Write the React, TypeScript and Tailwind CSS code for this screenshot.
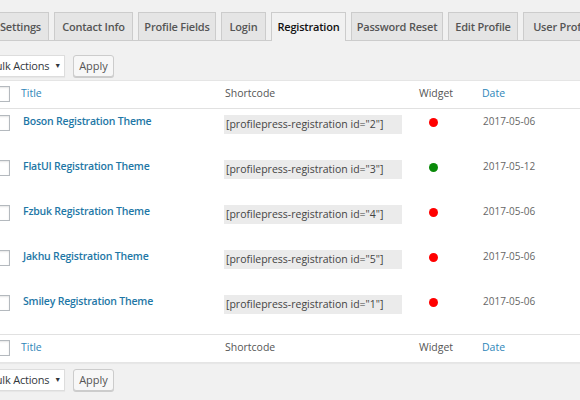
import React from 'react'

const tabs = [
  { label: 'Settings', w: 57 },
  { label: 'Contact Info', w: 79 },
  { label: 'Profile Fields', w: 78 },
  { label: 'Login', w: 45 },
  { label: 'Registration', w: 75, active: true },
  { label: 'Password Reset', w: 92 },
  { label: 'Edit Profile', w: 70 },
  { label: 'User Profile', w: 80 },
]

const rows = [
  { title: 'Boson Registration Theme', id: '2', on: false, date: '2017-05-06' },
  { title: 'FlatUI Registration Theme', id: '3', on: true, date: '2017-05-12' },
  { title: 'Fzbuk Registration Theme', id: '4', on: false, date: '2017-05-06' },
  { title: 'Jakhu Registration Theme', id: '5', on: false, date: '2017-05-06' },
  { title: 'Smiley Registration Theme', id: '1', on: false, date: '2017-05-06' },
]

const cols = 'grid grid-cols-[36px_205px_189px_62px_140px]'

const Checkbox = () => (
  <div className="ml-[13px] h-[16px] w-[16px] border border-[#b4b9be] bg-white shadow-[inset_0_1px_2px_rgba(0,0,0,0.1)]" />
)

const TableNav = () => (
  <div className="-ml-[20px] flex items-center gap-[8px]">
    <div className="flex h-[22px] w-[85px] items-center justify-end gap-[5px] whitespace-nowrap border border-[#ddd] bg-white pr-[3px] text-[11px] tracking-[-0.2px] text-[#32373c] shadow-[0_1px_1px_rgba(0,0,0,0.04)]">
      <span>Bulk Actions</span>
      <span className="text-[7px]">▼</span>
    </div>
    <div className="flex h-[22px] w-[41px] items-center justify-center rounded-[3px] border border-[#ccc] bg-[#f7f7f7] text-[11px] text-[#555] shadow-[0_1px_0_#ccc]">
      Apply
    </div>
  </div>
)

const HeaderRow = ({ top }: { top?: boolean }) => (
  <div
    className={`${cols} h-[28px] items-center pb-[2px] text-[10.5px] ${
      top ? 'border-b border-[#e1e1e1]' : 'border-t border-[#e1e1e1]'
    }`}
  >
    <Checkbox />
    <div className="pl-[4px] text-[#2e86b9]">Title</div>
    <div className="pl-[3px] text-[#555]">Shortcode</div>
    <div className="pl-[8px] text-[#555]">Widget</div>
    <div className="pl-[9px] text-[#2e86b9]">Date</div>
  </div>
)

export default function App() {
  return (
    <div
      className="h-[400px] w-[580px] overflow-hidden bg-[#f1f1f1]"
      style={{ fontFamily: '"Open Sans", "Noto Sans", sans-serif' }}
    >
      <div className="-ml-[8px] flex h-[41px] items-end gap-[5px] border-b border-[#ccc]">
        {tabs.map((t) => (
          <div
            key={t.label}
            style={{ width: t.w }}
            className={`flex h-[28px] shrink-0 items-center justify-center whitespace-nowrap border border-b-0 border-[#ccc] pt-[2px] text-[11px] font-semibold tracking-[-0.2px] ${
              t.active
                ? '-mb-px h-[29px] bg-[#f1f1f1] pb-px text-[#111]'
                : 'bg-[#e5e5e5] text-[#555]'
            }`}
          >
            {t.label}
          </div>
        ))}
      </div>

      <div className="mt-[14px]">
        <TableNav />
      </div>

      <div className="mt-[3px] -ml-[20px] w-[640px] border border-[#e5e5e5] bg-white shadow-[0_1px_1px_rgba(0,0,0,0.04)]">
        <HeaderRow top />
        {rows.map((r) => (
          <div key={r.id} className={`${cols} h-[45px] items-start`}>
            <div className="pt-[6px]">
              <Checkbox />
            </div>
            <div className="pl-[6px] pt-[2px] text-[10.5px] font-semibold leading-[20px] tracking-[-0.2px] text-[#1e77a6]">
              {r.title}
            </div>
            <div className="pl-[2px] pt-[6px]">
              <div className="flex h-[19px] w-[178px] items-center bg-[#ebebeb] pl-[2px] text-[10.5px] text-[#444]">
                [profilepress-registration id="{r.id}"]
              </div>
            </div>
            <div className="pl-[18px] pt-[9px]">
              <div
                className={`h-[9px] w-[9px] rounded-full ${
                  r.on ? 'bg-[#0a8a0a]' : 'bg-[#f00]'
                }`}
              />
            </div>
            <div className="pl-[10px] pt-[2px] text-[10px] leading-[20px] text-[#666]">
              {r.date}
            </div>
          </div>
        ))}
        <HeaderRow />
      </div>

      <div className="mt-[6px]">
        <TableNav />
      </div>
    </div>
  )
}
